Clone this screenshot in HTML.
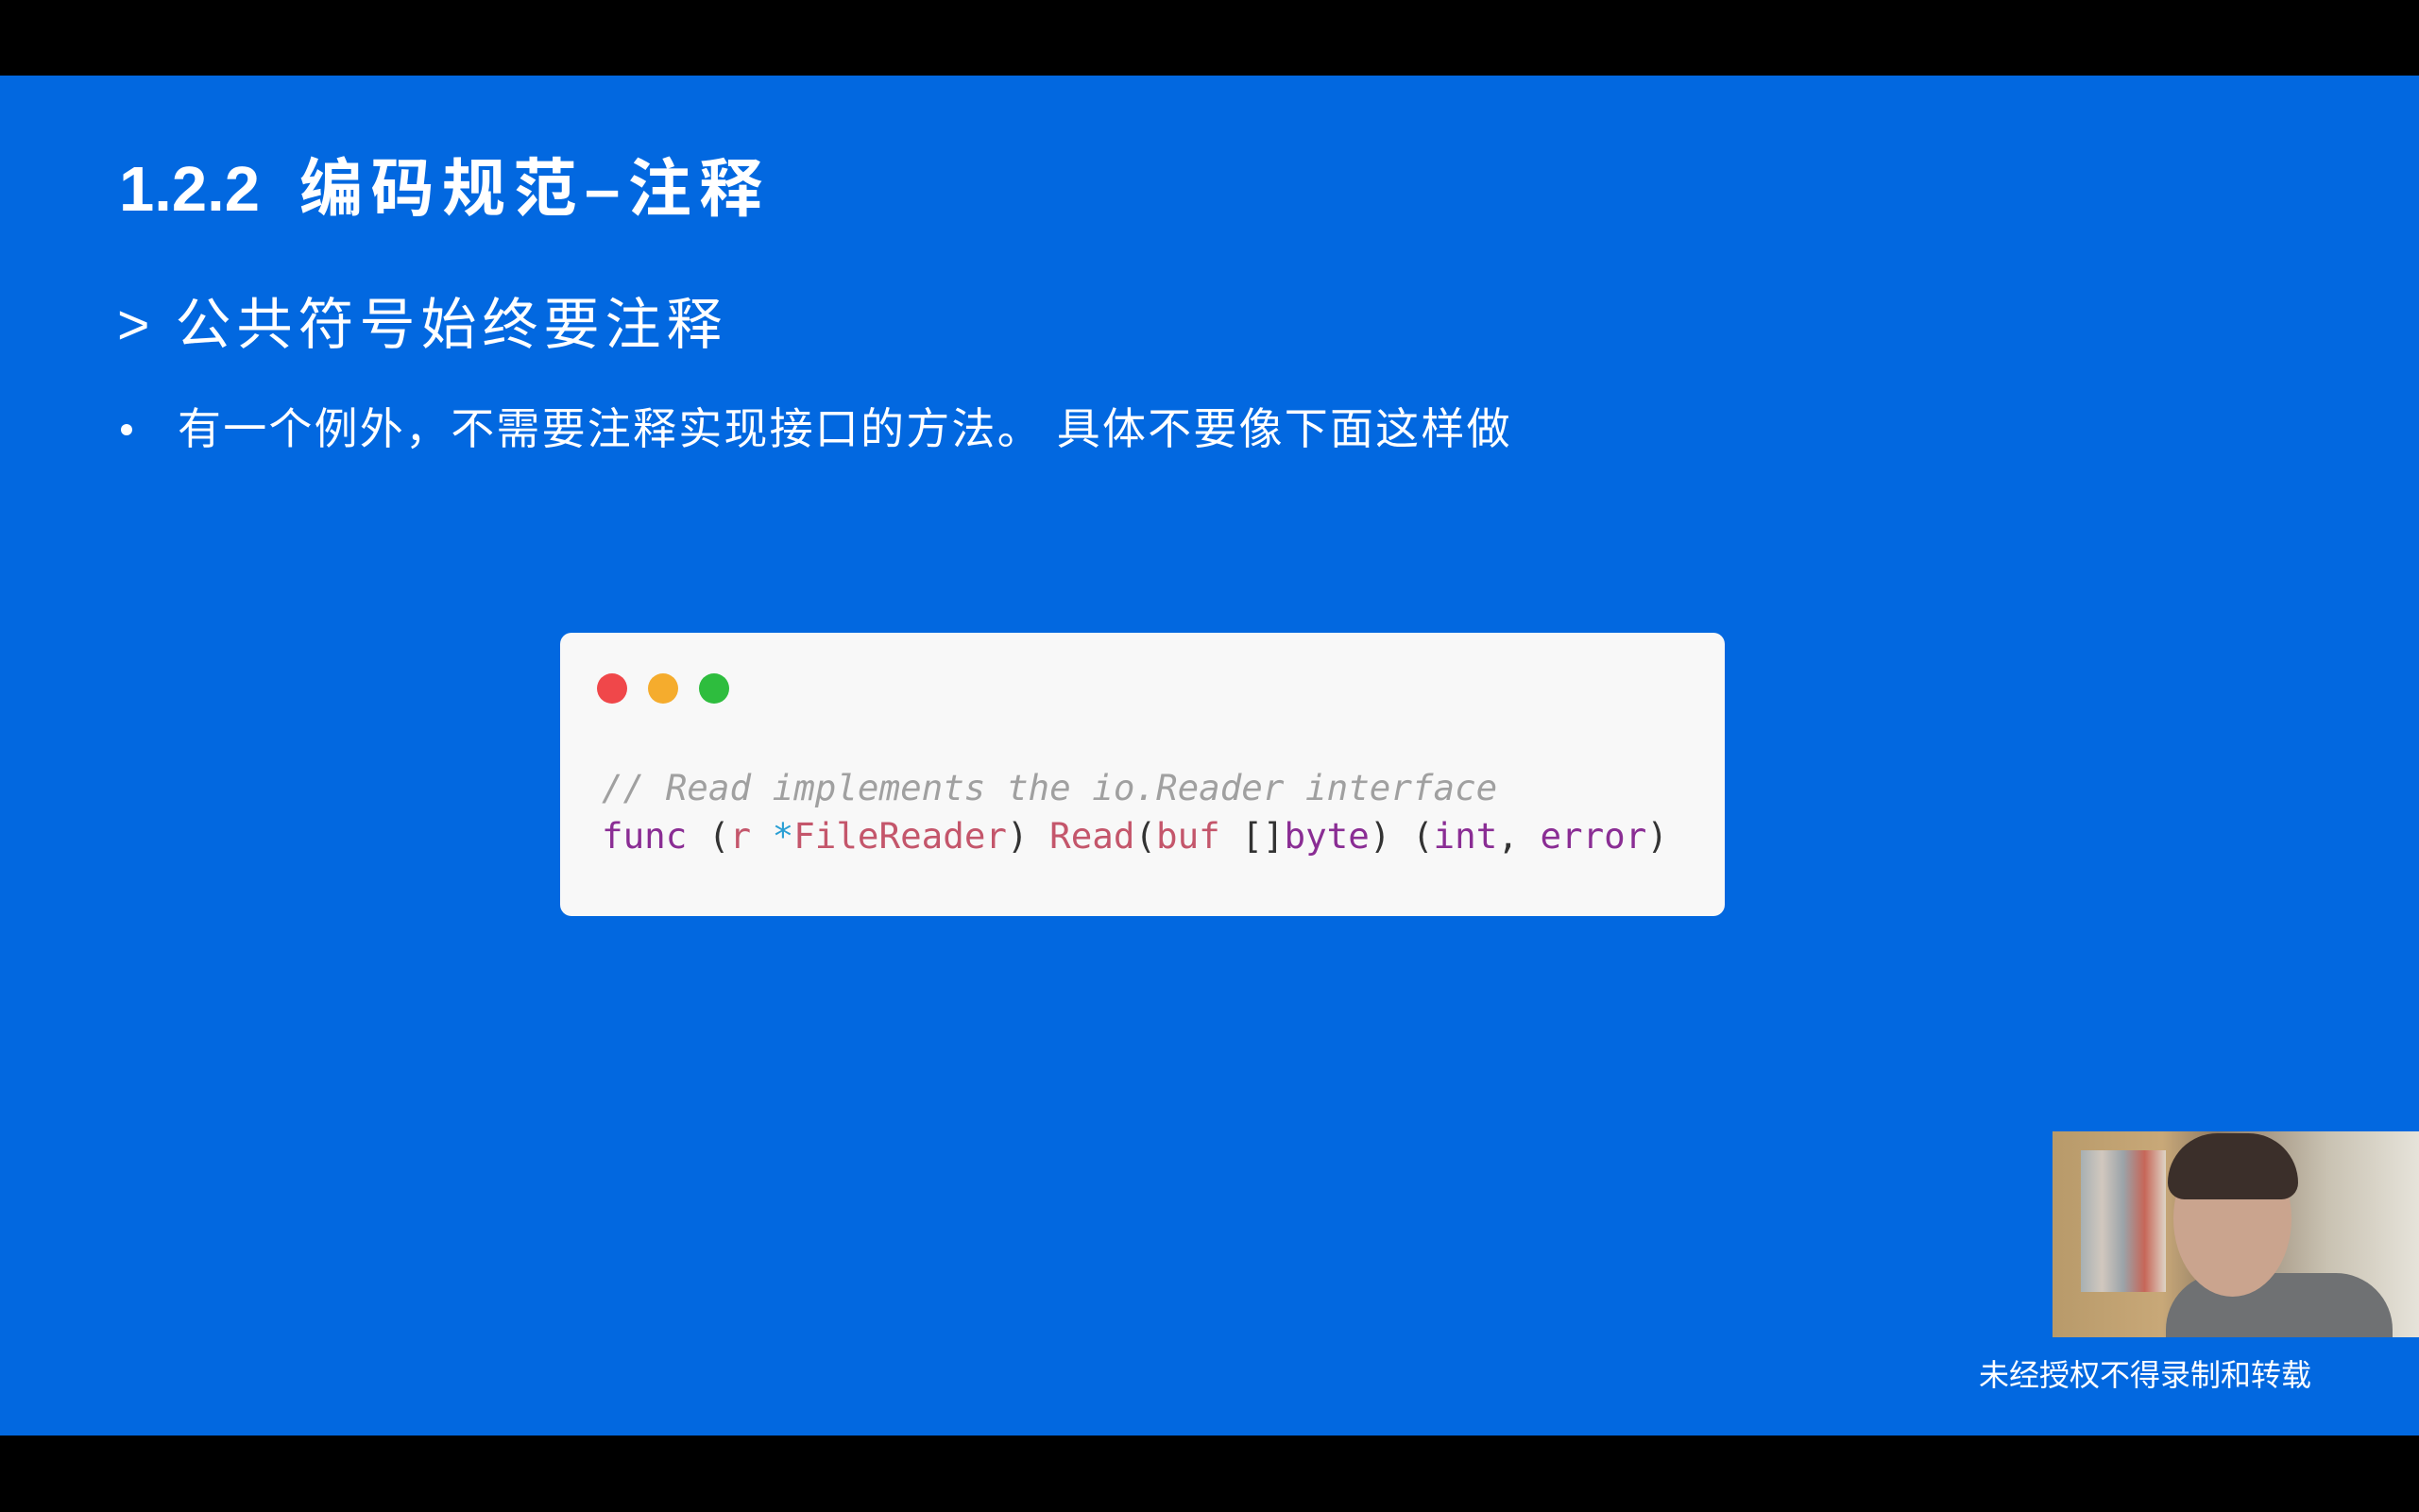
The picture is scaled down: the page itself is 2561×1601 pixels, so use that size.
<!DOCTYPE html>
<html><head><meta charset="utf-8"><style>
html,body{margin:0;padding:0;background:#000;}
body{width:2561px;height:1601px;position:relative;overflow:hidden;font-family:"Liberation Sans","Noto Sans CJK SC",sans-serif;}
#slide{position:absolute;left:0;top:80px;width:2561px;height:1440px;background:#0268e0;}
.t{position:absolute;color:#fff;white-space:nowrap;}
#title{left:126px;top:156px;font-size:67px;font-weight:bold;line-height:90px;}
#title span{letter-spacing:8.5px;margin-left:42px;}
#sub{left:124px;top:302px;font-size:59px;line-height:84px;letter-spacing:6px;}
#sub span{letter-spacing:0;margin-right:27px;}
#bul{left:188px;top:422px;font-size:46px;line-height:64px;letter-spacing:2.2px;}
#dot{position:absolute;left:128px;top:449px;width:12px;height:12px;border-radius:50%;background:#fff;}
#code{position:absolute;left:593px;top:670px;width:1233px;height:300px;background:#f8f8f8;border-radius:12px;}
.c{position:absolute;top:43px;width:32px;height:32px;border-radius:50%;}
pre{position:absolute;left:44px;margin:0;font-family:"DejaVu Sans Mono","Liberation Mono",monospace;font-size:37.5px;line-height:50px;color:#333;}
#cam{position:absolute;left:2173px;top:1198px;width:388px;height:218px;background:linear-gradient(90deg,#b89a6a 0%,#c8a878 30%,#8d7a65 45%,#c9c2b2 75%,#e6e3da 100%);overflow:hidden;}
#wm{left:2095px;top:1434px;font-size:32px;line-height:44px;}
</style></head><body>
<div id="slide"></div>
<div class="t" id="title">1.2.2<span>编码规范–注释</span></div>
<div class="t" id="sub"><span>&gt;</span>公共符号始终要注释</div>
<div id="dot"></div>
<div class="t" id="bul">有一个例外，不需要注释实现接口的方法。 具体不要像下面这样做</div>
<div id="code">
<div class="c" style="left:39px;background:#f0474a"></div>
<div class="c" style="left:93px;background:#f5ac2d"></div>
<div class="c" style="left:147px;background:#2ebd3e"></div>
<pre style="top:139px;color:#a0a0a0;font-style:italic">// Read implements the io.Reader interface</pre>
<pre style="top:190px"><span style="color:#8a2d94">func</span> (<span style="color:#c4566b">r</span> <span style="color:#2a9fd4">*</span><span style="color:#c4566b">FileReader</span>) <span style="color:#c4566b">Read</span>(<span style="color:#c4566b">buf</span> []<span style="color:#8a2d94">byte</span>) (<span style="color:#8a2d94">int</span>, <span style="color:#8a2d94">error</span>)</pre>
</div>
<div id="cam">
<div style="position:absolute;left:30px;top:20px;width:90px;height:150px;background:linear-gradient(90deg,#9fb8d0,#d9d9e0,#8aa3c0,#c74b4b,#e8e8e8);opacity:.7"></div>
<div style="position:absolute;left:120px;top:150px;width:240px;height:90px;border-radius:60px 60px 0 0;background:#6f7173"></div>
<div style="position:absolute;left:128px;top:10px;width:125px;height:165px;border-radius:50%;background:#caa48e"></div>
<div style="position:absolute;left:122px;top:2px;width:138px;height:70px;border-radius:60px 60px 20px 20px;background:#3b2f2a"></div>
</div>
<div class="t" id="wm">未经授权不得录制和转载</div>
</body></html>
